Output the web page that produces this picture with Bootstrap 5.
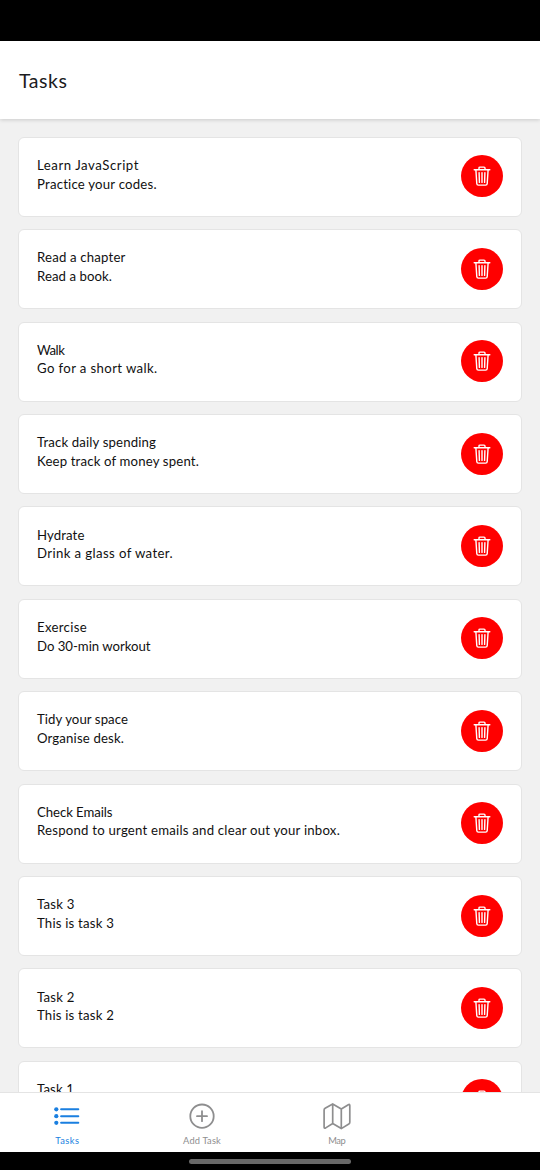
<!DOCTYPE html>
<html lang="en">
<head>
<meta charset="utf-8">
<meta name="viewport" content="width=device-width, initial-scale=1">
<title>Tasks</title>
<link href="https://cdn.jsdelivr.net/npm/bootstrap@5.3.0/dist/css/bootstrap.min.css" rel="stylesheet">
<style>
  body { font-family: Lato, "Open Sans", sans-serif; background: #f1f1f1; color: #1c1c1e; }
  .screen { height: 1170px; width: 540px; }
  .status-strip { height: 41px; }
  .app-header { height: 77.5px; padding: 2px 0 0 19px; box-shadow: 0 1px 4px rgba(0,0,0,.16); z-index: 1; }
  .app-header h1 { font-size: 19.5px; line-height: 26px; font-weight: 400; }
  .task-list { padding: 18.3px 18px 0; gap: 12.4px; min-height: 0; }
  .task-card { height: 80px; border: 1px solid #e4e4e4; border-radius: 6px; padding: 0 18px; }
  .task-copy { font-size: 13.2px; line-height: 18.5px; padding-top: 18.3px; color: #111; }
  .btn-trash { width: 42px; height: 42px; background: #f00; margin-top: 17.7px; }
  .tab-strip { height: 60px; border-top: 1px solid #e4e4e4; z-index: 1; }
  .tab-link { width: 134.7px; color: #8e8e8f; font-size: 9.3px; line-height: 12px; padding-top: 9px; gap: 5px; }
  .tab-link.active { color: #1a7fe0; }
  .gesture-area { height: 18px; }
  .gesture-pill { width: 162px; height: 5px; background: #686868; }
  .fit { white-space: nowrap; }
</style>
</head>
<body>
<svg class="d-none" xmlns="http://www.w3.org/2000/svg">
  <symbol id="trash" viewBox="0 0 20 22">
    <g fill="none" stroke="#fff" stroke-width="1.4" stroke-linecap="round" stroke-linejoin="round">
      <path d="M2.2 4.8h15.6M7 4.5V3.1q0-1 1-1h4q1 0 1 1v1.4M3.9 5l.9 13.6q.1 1.5 1.6 1.5h7.2q1.5 0 1.6-1.5L16.1 5"/>
      <path d="M7.1 7.6l.3 9.8M10 7.6v9.8M12.9 7.6l-.3 9.8"/>
    </g>
  </symbol>
</svg>
<div class="screen d-flex flex-column overflow-hidden">
  <div class="status-strip bg-black flex-shrink-0"></div>
  <header class="app-header bg-white d-flex align-items-center flex-shrink-0 position-relative">
    <h1 class="m-0 fit" data-width="48.5">Tasks</h1>
  </header>
  <main class="task-list d-flex flex-column flex-grow-1 overflow-hidden" id="tasks"></main>
  <nav class="tab-strip bg-white d-flex flex-shrink-0 position-relative">
    <a class="tab-link active d-flex flex-column align-items-center text-decoration-none" href="#">
      <svg width="28" height="28" viewBox="0 0 28 28" fill="none" stroke="currentColor" stroke-width="2" stroke-linecap="round"><path d="M8.1 7.3h17.2M8.1 14.2h17.2M8.1 20.8h17.2"/><g fill="currentColor" stroke="none"><circle cx="3.3" cy="7.3" r="2.1"/><circle cx="3.3" cy="14.2" r="2.1"/><circle cx="3.3" cy="20.8" r="2.1"/></g></svg>
      <span class="fit" data-width="24">Tasks</span>
    </a>
    <a class="tab-link d-flex flex-column align-items-center text-decoration-none" href="#">
      <svg width="28" height="28" viewBox="0 0 28 28" fill="none" stroke="currentColor" stroke-width="1.8" stroke-linecap="round"><circle cx="14" cy="14.2" r="11.7"/><path d="M14 9.2v10M9 14.2h10"/></svg>
      <span class="fit" data-width="38">Add Task</span>
    </a>
    <a class="tab-link d-flex flex-column align-items-center text-decoration-none" href="#">
      <svg width="28" height="28" viewBox="0 0 28 28" fill="none" stroke="currentColor" stroke-width="1.7" stroke-linejoin="round"><path d="M9.7 1.9L2.1 6.3q-1 .6-1 1.6v17q0 1.8 1.6 1l7-4.4 8.6 5.1 7.5-4.6q1-.6 1-1.8V3.5q0-1.6-1.5-.8l-7 4.3zM9.7 1.9v19.6M18.3 7v19.6"/></svg>
      <span class="fit" data-width="17">Map</span>
    </a>
  </nav>
  <div class="gesture-area bg-black d-flex align-items-center justify-content-center flex-shrink-0"><div class="gesture-pill rounded-pill"></div></div>
</div>
<script src="https://cdn.jsdelivr.net/npm/bootstrap@5.3.0/dist/js/bootstrap.bundle.min.js"></script>
<script>
  // title, title width, note, note width
  const tasks = [
    ["Learn JavaScript", 102, "Practice your codes.", 120],
    ["Read a chapter", 88.5, "Read a book.", 75],
    ["Walk", 27.5, "Go for a short walk.", 120.5],
    ["Track daily spending", 119, "Keep track of money spent.", 162],
    ["Hydrate", 47.5, "Drink a glass of water.", 136],
    ["Exercise", 50, "Do 30-min workout", 113.5],
    ["Tidy your space", 91, "Organise desk.", 87],
    ["Check Emails", 75.5, "Respond to urgent emails and clear out your inbox.", 303],
    ["Task 3", 37.5, "This is task 3", 77],
    ["Task 2", 37.5, "This is task 2", 77],
    ["Task 1", 37, "", 0]
  ];
  document.getElementById("tasks").innerHTML = tasks.map(([t, tw, n, nw]) => `
    <article class="task-card bg-white d-flex justify-content-between flex-shrink-0">
      <div class="task-copy">
        <div><span class="fit" data-width="${tw}">${t}</span></div>
        ${n ? `<div><span class="fit" data-width="${nw}">${n}</span></div>` : ""}
      </div>
      <button class="btn-trash btn border-0 rounded-circle p-0 d-flex align-items-center justify-content-center" aria-label="Delete">
        <svg width="20" height="22"><use href="#trash"/></svg>
      </button>
    </article>`).join("");
  // track each label to its set width
  document.querySelectorAll(".fit").forEach(el => {
    const gap = (el.dataset.width - el.getBoundingClientRect().width) / el.textContent.length;
    el.style.letterSpacing = gap.toFixed(3) + "px";
  });
</script>
</body>
</html>
